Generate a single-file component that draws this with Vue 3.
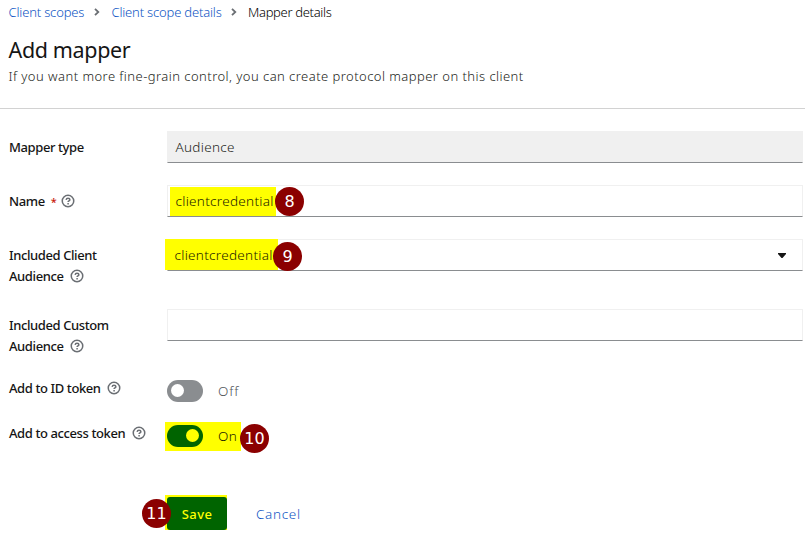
<script setup>
import { h } from 'vue'

const HelpIcon = () =>
  h('svg', { class: 'help', width: 14, height: 14, viewBox: '0 0 14 14', fill: 'none', stroke: '#6a6e73' }, [
    h('circle', { cx: 7, cy: 7, r: 5.75, 'stroke-width': 1.5 }),
    h('path', { d: 'M5.1 5.8C5.3 4.7 6 4.3 7 4.3c1.2 0 1.9.6 1.9 1.4 0 1.2-1.8 1.2-1.8 2.3', 'stroke-width': 1.5 }),
    h('path', { d: 'M7.1 8.9v1.5', 'stroke-width': 1.5 }),
  ])
</script>

<template>
  <main class="page">
    <header class="head">
      <nav class="crumbs">
        <a class="c1">Client scopes</a>
        <svg class="chev" width="6" height="8" viewBox="0 0 6 8"><path d="M1 .8 4.3 4 1 7.2" /></svg>
        <a class="c2">Client scope details</a>
        <svg class="chev" width="6" height="8" viewBox="0 0 6 8"><path d="M1 .8 4.3 4 1 7.2" /></svg>
        <span class="c3">Mapper details</span>
      </nav>
      <h1>Add mapper</h1>
      <p>If you want more fine-grain control, you can create protocol mapper on this client</p>
    </header>
    <form class="form">
      <div class="row">
        <label>Mapper type</label>
        <div class="field disabled"><span>Audience</span></div>
      </div>
      <div class="row">
        <label class="required">Name<span class="req">*</span><HelpIcon /></label>
        <div class="field"><i class="mark mark-name"></i><span class="value">clientcredential</span><b class="badge b8">8</b></div>
      </div>
      <div class="row tall">
        <label>Included Client<br />Audience<HelpIcon /></label>
        <div class="field select">
          <i class="mark mark-select"></i><span class="value">clientcredential</span><b class="badge b9">9</b>
          <svg class="caret" width="8" height="5" viewBox="0 0 8 5"><path d="M0 0h8v1L4.5 5h-1L0 1z" /></svg>
        </div>
      </div>
      <div class="row tall custom">
        <label>Included Custom<br />Audience<HelpIcon /></label>
        <div class="field"></div>
      </div>
      <div class="row switch-row">
        <label>Add to ID token<HelpIcon /></label>
        <div class="switch"><span class="track"><i></i></span><span class="state off">Off</span></div>
      </div>
      <div class="row switch-row">
        <label>Add to access token<HelpIcon /></label>
        <div class="switch on"><i class="mark mark-switch"></i><span class="track"><i></i></span><span class="state">On</span><b class="badge b10">10</b></div>
      </div>
      <div class="actions">
        <i class="mark mark-save"></i>
        <button type="button" class="save">Save</button>
        <a class="cancel">Cancel</a>
        <b class="badge b11">11</b>
      </div>
    </form>
  </main>
</template>

<style>
body { background: #fff; overflow: hidden; }
</style>
<style scoped>
* { box-sizing: border-box; }
.page { width: 805px; height: 533px; overflow: hidden; font-family: "Noto Sans", sans-serif; font-size: 13px; color: #151515; }
.head { height: 109px; border-bottom: 1px solid #d2d2d2; padding-left: 8.5px; white-space: nowrap; }
.crumbs { display: flex; align-items: center; height: 24px; font-weight: 350; }
.crumbs a, .cancel { color: #0f56c4; }
.c1 { width: 85.5px; letter-spacing: -.17px; }
.c2 { width: 119px; letter-spacing: -.18px; }
.c3 { letter-spacing: -.33px; color: #000; }
.chev { fill: none; stroke: #6a6e73; stroke-width: 1.8; margin-right: 11.5px; }
h1 { margin: 11px 0 0; height: 30px; line-height: 30px; font-size: 21.5px; font-weight: 400; letter-spacing: -.36px; }
p { margin: 1px 0 0; height: 20px; line-height: 20px; font-weight: 350; letter-spacing: .455px; color: #1c1e20; }
.form { padding: 22px 2px 0 9px; display: flex; flex-direction: column; }
.row { display: grid; grid-template-columns: 158px 1fr; align-items: start; height: 54px; }
.row.tall { height: 70px; }
.row.custom { height: 71px; }
.row.switch-row { height: 45px; }
label { font-weight: 500; line-height: 21.5px; padding-top: 6px; white-space: nowrap; letter-spacing: -.4px; }
.row.tall label { line-height: 21px; }
.switch-row label { padding-top: 0; line-height: 17px; }
.help { margin-left: 6.5px; vertical-align: -2px; }
.required .help { margin-left: 5px; }
.req { color: #c9190b; margin-left: 6px; font-size: 11px; }
.field { position: relative; height: 32px; border: 1px solid #f0f0f0; border-bottom-color: #8a8d90; padding-left: 7.5px; display: flex; align-items: center; font-size: 13.5px; font-weight: 330; letter-spacing: .3px; color: #1c1e20; }
.field.disabled { background: #f0f0f0; }
.field > span { position: relative; }
.select { padding-left: 6.5px; }
.caret { margin-left: auto; margin-right: 16px; fill: #151515; }
.mark { position: absolute; background: #ff0; }
.mark-name { left: 2px; top: 1px; width: 106px; height: 29px; }
.mark-select { left: -3px; top: -1px; width: 113px; height: 31px; }
.field .value { color: #1c1c00; }
.badge { position: absolute; width: 29px; height: 29px; border-radius: 50%; background: #8b0000; color: #fff; font: 400 16px/29px "DejaVu Sans", sans-serif; letter-spacing: 0; text-align: center; }
.b8 { left: 107px; top: 1px; }
.b9 { left: 105px; top: 2px; }
.switch { position: relative; display: flex; align-items: center; height: 22px; }
.track { position: relative; width: 36px; height: 22px; border-radius: 11px; background: #8a8d90; padding: 4px; display: flex; }
.track i { width: 13px; height: 13px; border-radius: 50%; background: #fff; }
.on .track { background: #006400; justify-content: flex-end; }
.on .track i { background: #ff0; }
.state { position: relative; margin-left: 15px; font-size: 13.5px; font-weight: 330; letter-spacing: .3px; color: #1c1c00; }
.off { color: #53575b; letter-spacing: .9px; }
.mark-switch { left: -2px; top: -3px; width: 76px; height: 29px; }
.b10 { left: 73px; top: -1px; }
.actions { position: relative; display: flex; margin-left: 158px; margin-top: 27px; align-items: center; height: 33px; }
.mark-save { left: -2px; top: -2px; width: 62px; height: 35px; }
.save { position: relative; width: 60px; height: 33px; padding: 0; border: 0; border-radius: 3px; background: #006400; color: #ff0; font: 500 13px "Noto Sans", sans-serif; letter-spacing: .4px; }
.cancel { margin-left: 29px; font-size: 13.5px; font-weight: 350; letter-spacing: .68px; }
.b11 { left: -25px; top: 2px; }
</style>
